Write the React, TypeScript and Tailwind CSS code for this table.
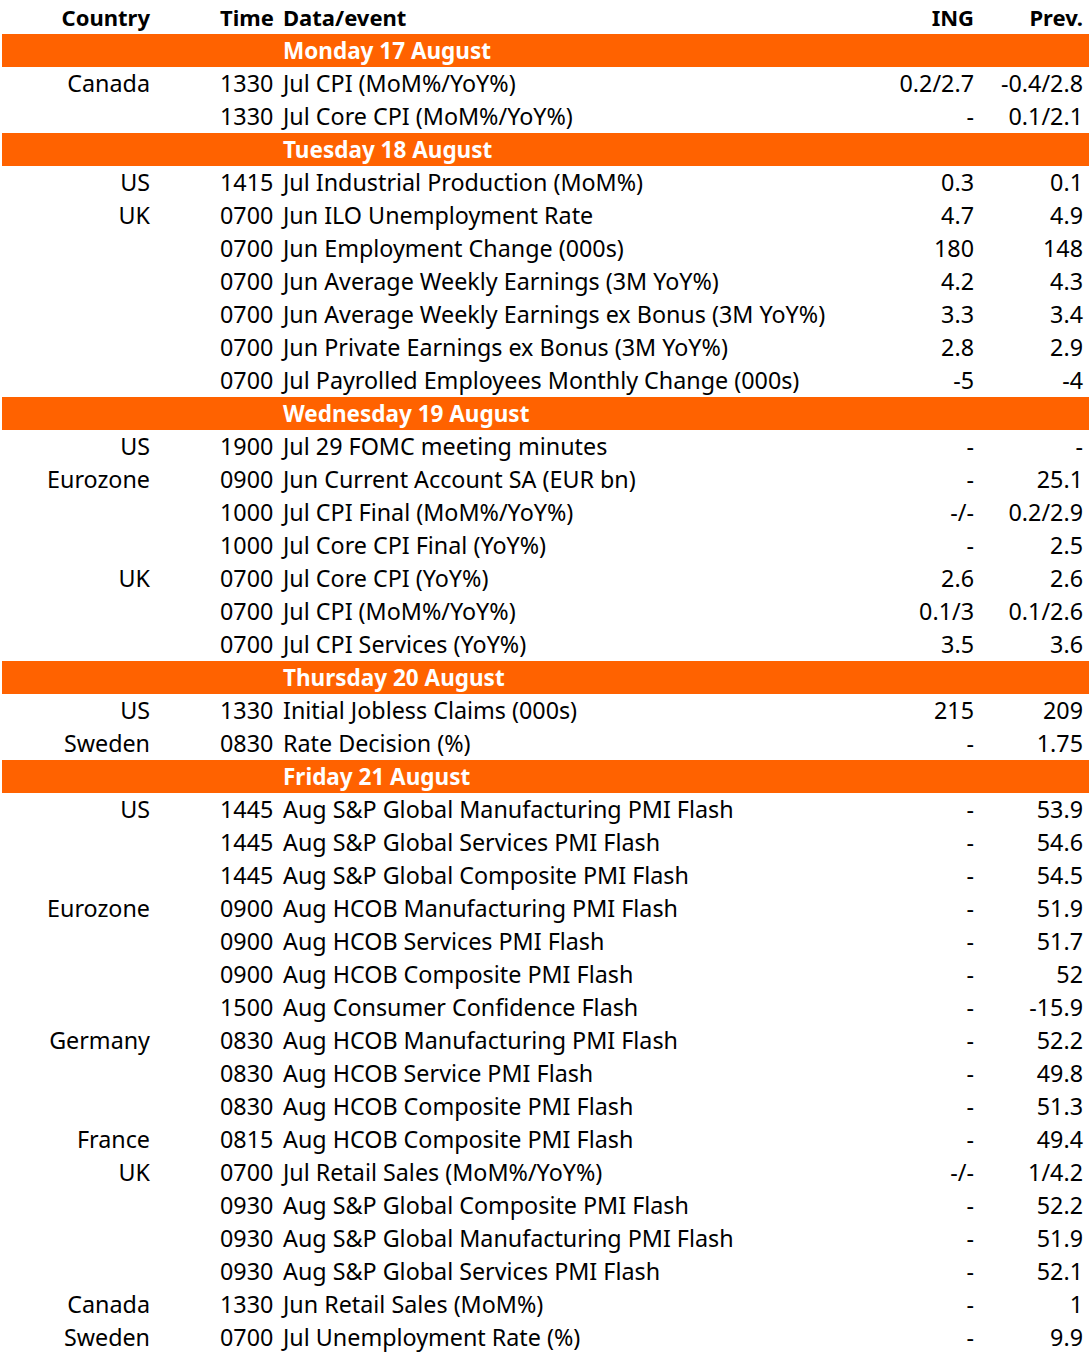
type Row = { country?: string; time: string; event: string; ing: string; prev: string };
type Day = { label: string; rows: Row[] };

const days: Day[] = [
  {
    label: "Monday 17 August",
    rows: [
      { country: "Canada", time: "1330", event: "Jul CPI (MoM%/YoY%)", ing: "0.2/2.7", prev: "-0.4/2.8" },
      { time: "1330", event: "Jul Core CPI (MoM%/YoY%)", ing: "-", prev: "0.1/2.1" },
    ],
  },
  {
    label: "Tuesday 18 August",
    rows: [
      { country: "US", time: "1415", event: "Jul Industrial Production (MoM%)", ing: "0.3", prev: "0.1" },
      { country: "UK", time: "0700", event: "Jun ILO Unemployment Rate", ing: "4.7", prev: "4.9" },
      { time: "0700", event: "Jun Employment Change (000s)", ing: "180", prev: "148" },
      { time: "0700", event: "Jun Average Weekly Earnings (3M YoY%)", ing: "4.2", prev: "4.3" },
      { time: "0700", event: "Jun Average Weekly Earnings ex Bonus (3M YoY%)", ing: "3.3", prev: "3.4" },
      { time: "0700", event: "Jun Private Earnings ex Bonus (3M YoY%)", ing: "2.8", prev: "2.9" },
      { time: "0700", event: "Jul Payrolled Employees Monthly Change (000s)", ing: "-5", prev: "-4" },
    ],
  },
  {
    label: "Wednesday 19 August",
    rows: [
      { country: "US", time: "1900", event: "Jul 29 FOMC meeting minutes", ing: "-", prev: "-" },
      { country: "Eurozone", time: "0900", event: "Jun Current Account SA (EUR bn)", ing: "-", prev: "25.1" },
      { time: "1000", event: "Jul CPI Final (MoM%/YoY%)", ing: "-/-", prev: "0.2/2.9" },
      { time: "1000", event: "Jul Core CPI Final (YoY%)", ing: "-", prev: "2.5" },
      { country: "UK", time: "0700", event: "Jul Core CPI (YoY%)", ing: "2.6", prev: "2.6" },
      { time: "0700", event: "Jul CPI (MoM%/YoY%)", ing: "0.1/3", prev: "0.1/2.6" },
      { time: "0700", event: "Jul CPI Services (YoY%)", ing: "3.5", prev: "3.6" },
    ],
  },
  {
    label: "Thursday 20 August",
    rows: [
      { country: "US", time: "1330", event: "Initial Jobless Claims (000s)", ing: "215", prev: "209" },
      { country: "Sweden", time: "0830", event: "Rate Decision (%)", ing: "-", prev: "1.75" },
    ],
  },
  {
    label: "Friday 21 August",
    rows: [
      { country: "US", time: "1445", event: "Aug S&P Global Manufacturing PMI Flash", ing: "-", prev: "53.9" },
      { time: "1445", event: "Aug S&P Global Services PMI Flash", ing: "-", prev: "54.6" },
      { time: "1445", event: "Aug S&P Global Composite PMI Flash", ing: "-", prev: "54.5" },
      { country: "Eurozone", time: "0900", event: "Aug HCOB Manufacturing PMI Flash", ing: "-", prev: "51.9" },
      { time: "0900", event: "Aug HCOB Services PMI Flash", ing: "-", prev: "51.7" },
      { time: "0900", event: "Aug HCOB Composite PMI Flash", ing: "-", prev: "52" },
      { time: "1500", event: "Aug Consumer Confidence Flash", ing: "-", prev: "-15.9" },
      { country: "Germany", time: "0830", event: "Aug HCOB Manufacturing PMI Flash", ing: "-", prev: "52.2" },
      { time: "0830", event: "Aug HCOB Service PMI Flash", ing: "-", prev: "49.8" },
      { time: "0830", event: "Aug HCOB Composite PMI Flash", ing: "-", prev: "51.3" },
      { country: "France", time: "0815", event: "Aug HCOB Composite PMI Flash", ing: "-", prev: "49.4" },
      { country: "UK", time: "0700", event: "Jul Retail Sales (MoM%/YoY%)", ing: "-/-", prev: "1/4.2" },
      { time: "0930", event: "Aug S&P Global Composite PMI Flash", ing: "-", prev: "52.2" },
      { time: "0930", event: "Aug S&P Global Manufacturing PMI Flash", ing: "-", prev: "51.9" },
      { time: "0930", event: "Aug S&P Global Services PMI Flash", ing: "-", prev: "52.1" },
      { country: "Canada", time: "1330", event: "Jun Retail Sales (MoM%)", ing: "-", prev: "1" },
      { country: "Sweden", time: "0700", event: "Jul Unemployment Rate (%)", ing: "-", prev: "9.9" },
    ],
  },
];

function DataRow({ row }: { row: Row }) {
  return (
    <div className="flex h-[33px] items-center text-[23.3px]">
      <div className="w-[150px] text-right">{row.country ?? ""}</div>
      <div className="ml-[70px] w-[63px]">{row.time}</div>
      <div className="flex-1 whitespace-nowrap">{row.event}</div>
      <div className="w-[100px] text-right">{row.ing}</div>
      <div className="w-[109px] text-right">{row.prev}</div>
      <div className="w-[6px]" />
    </div>
  );
}

export default function App() {
  return (
    <div
      className="w-[1089px] bg-white text-[22px] text-black"
      style={{ fontFamily: '"Noto Sans", sans-serif' }}
    >
      {/* header */}
      <div className="flex h-[34px] items-center font-bold">
        <div className="w-[150px] text-right">Country</div>
        <div className="ml-[70px] w-[63px]">Time</div>
        <div className="flex-1">Data/event</div>
        <div className="w-[100px] text-right">ING</div>
        <div className="w-[109px] text-right">Prev.</div>
        <div className="w-[6px]" />
      </div>

      {days.map((day) => (
        <div key={day.label}>
          <div className="ml-[2px] flex h-[33px] items-center bg-[#ff6200] text-[22.5px] font-bold text-white">
            <div className="ml-[281px]">{day.label}</div>
          </div>
          {day.rows.map((row, i) => (
            <DataRow key={i} row={row} />
          ))}
        </div>
      ))}
    </div>
  );
}
